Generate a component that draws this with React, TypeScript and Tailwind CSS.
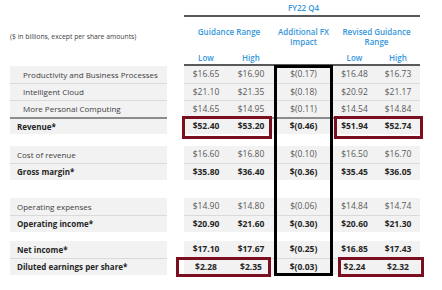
import React from "react";

type Row = {
  label: string;
  values: string[];
  bold?: boolean;
  indent?: boolean;
  rule?: boolean;
};

const groups: { rows: Row[]; gap: string }[] = [
  {
    gap: "mt-0",
    rows: [
      { label: "Productivity and Business Processes", values: ["$16.65", "$16.90", "$(0.17)", "$16.48", "$16.73"], indent: true },
      { label: "Intelligent Cloud", values: ["$21.10", "$21.35", "$(0.18)", "$20.92", "$21.17"], indent: true },
      { label: "More Personal Computing", values: ["$14.65", "$14.95", "$(0.11)", "$14.54", "$14.84"], indent: true },
      { label: "Revenue*", values: ["$52.40", "$53.20", "$(0.46)", "$51.94", "$52.74"], bold: true, rule: true },
    ],
  },
  {
    gap: "mt-[12px]",
    rows: [
      { label: "Cost of revenue", values: ["$16.60", "$16.80", "$(0.10)", "$16.50", "$16.70"] },
      { label: "Gross margin*", values: ["$35.80", "$36.40", "$(0.36)", "$35.45", "$36.05"], bold: true },
    ],
  },
  {
    gap: "mt-[18px]",
    rows: [
      { label: "Operating expenses", values: ["$14.90", "$14.80", "$(0.06)", "$14.84", "$14.74"] },
      { label: "Operating income*", values: ["$20.90", "$21.60", "$(0.30)", "$20.60", "$21.30"], bold: true },
    ],
  },
  {
    gap: "mt-[9px]",
    rows: [
      { label: "Net income*", values: ["$17.10", "$17.67", "$(0.25)", "$16.85", "$17.43"], bold: true },
      { label: "Diluted earnings per share*", values: ["$2.28", "$2.35", "$(0.03)", "$2.24", "$2.32"], bold: true },
    ],
  },
];

const colWidths = ["w-[44px]", "w-[46px]", "w-[59px]", "w-[43px]", "w-[44px]"];

export default function App() {
  return (
    <div
      className="relative w-[442px] h-[290px] overflow-hidden bg-white text-[8px] text-[#595959]"
      style={{ fontFamily: '"Open Sans", "Noto Sans", sans-serif' }}
    >
      {/* Header */}
      <div className="flex">
        <div className="w-[184px] pl-[10px] pt-[32px] text-[6.8px] text-[#404040]">
          ($ in billions, except per share amounts)
        </div>
        <div className="w-[236px] font-semibold text-[#3496dc]">
          <div className="flex h-[17px] border-b-2 border-[#595959]">
            <div className="w-[90px]" />
            <div className="w-[59px] flex items-center justify-center">FY22 Q4</div>
          </div>
          <div className="flex h-[34px] pt-[10px] leading-[10px] text-center">
            <div className="w-[90px]">Guidance Range</div>
            <div className="w-[59px]">
              Additional FX
              <br />
              Impact
            </div>
            <div className="w-[87px]">
              Revised Guidance
              <br />
              Range
            </div>
          </div>
          <div className="flex h-[15px] items-center border-b-2 border-[#595959] text-center">
            <div className="w-[44px]">Low</div>
            <div className="w-[46px]">High</div>
            <div className="w-[59px]" />
            <div className="w-[43px]">Low</div>
            <div className="w-[44px]">High</div>
          </div>
        </div>
      </div>

      {/* Body */}
      {groups.map((g, gi) => (
        <div key={gi} className={g.gap}>
          {g.rows.map((r, ri) => {
            const border = r.rule
              ? "border-t-2 border-[#8c8c8c]"
              : ri > 0
              ? "border-t border-[#dadada]"
              : "";
            return (
              <div key={r.label} className="flex h-[17px]">
                <div
                  className={`ml-[10px] w-[157px] flex items-center bg-[#f2f2f2] ${border} ${
                    r.indent ? "pl-[13px]" : "pl-[7px]"
                  } ${r.bold ? "font-bold text-[#262626]" : "text-[#404040]"}`}
                >
                  {r.label}
                </div>
                <div className="w-[17px]" />
                <div
                  className={`flex w-[236px] bg-[#f2f2f2] text-[8.5px] ${border} ${
                    r.bold ? "font-bold text-[#262626]" : ""
                  }`}
                >
                  {r.values.map((v, vi) => (
                    <div key={vi} className={`${colWidths[vi]} flex items-center justify-center`}>
                      {v}
                    </div>
                  ))}
                </div>
              </div>
            );
          })}
        </div>
      ))}

      {/* Highlight boxes */}
      <div className="absolute left-[274px] top-[65px] w-[59px] h-[211px] border-[3px] border-black" />
      <div className="absolute left-[182px] top-[116px] w-[90px] h-[23px] border-[3px] border-[#7a0f1f]" />
      <div className="absolute left-[334px] top-[116px] w-[89px] h-[23px] border-[3px] border-[#7a0f1f]" />
      <div className="absolute left-[176px] top-[257px] w-[95px] h-[20px] border-[3px] border-[#7a0f1f]" />
      <div className="absolute left-[338px] top-[257px] w-[86px] h-[20px] border-[3px] border-[#7a0f1f]" />
    </div>
  );
}
